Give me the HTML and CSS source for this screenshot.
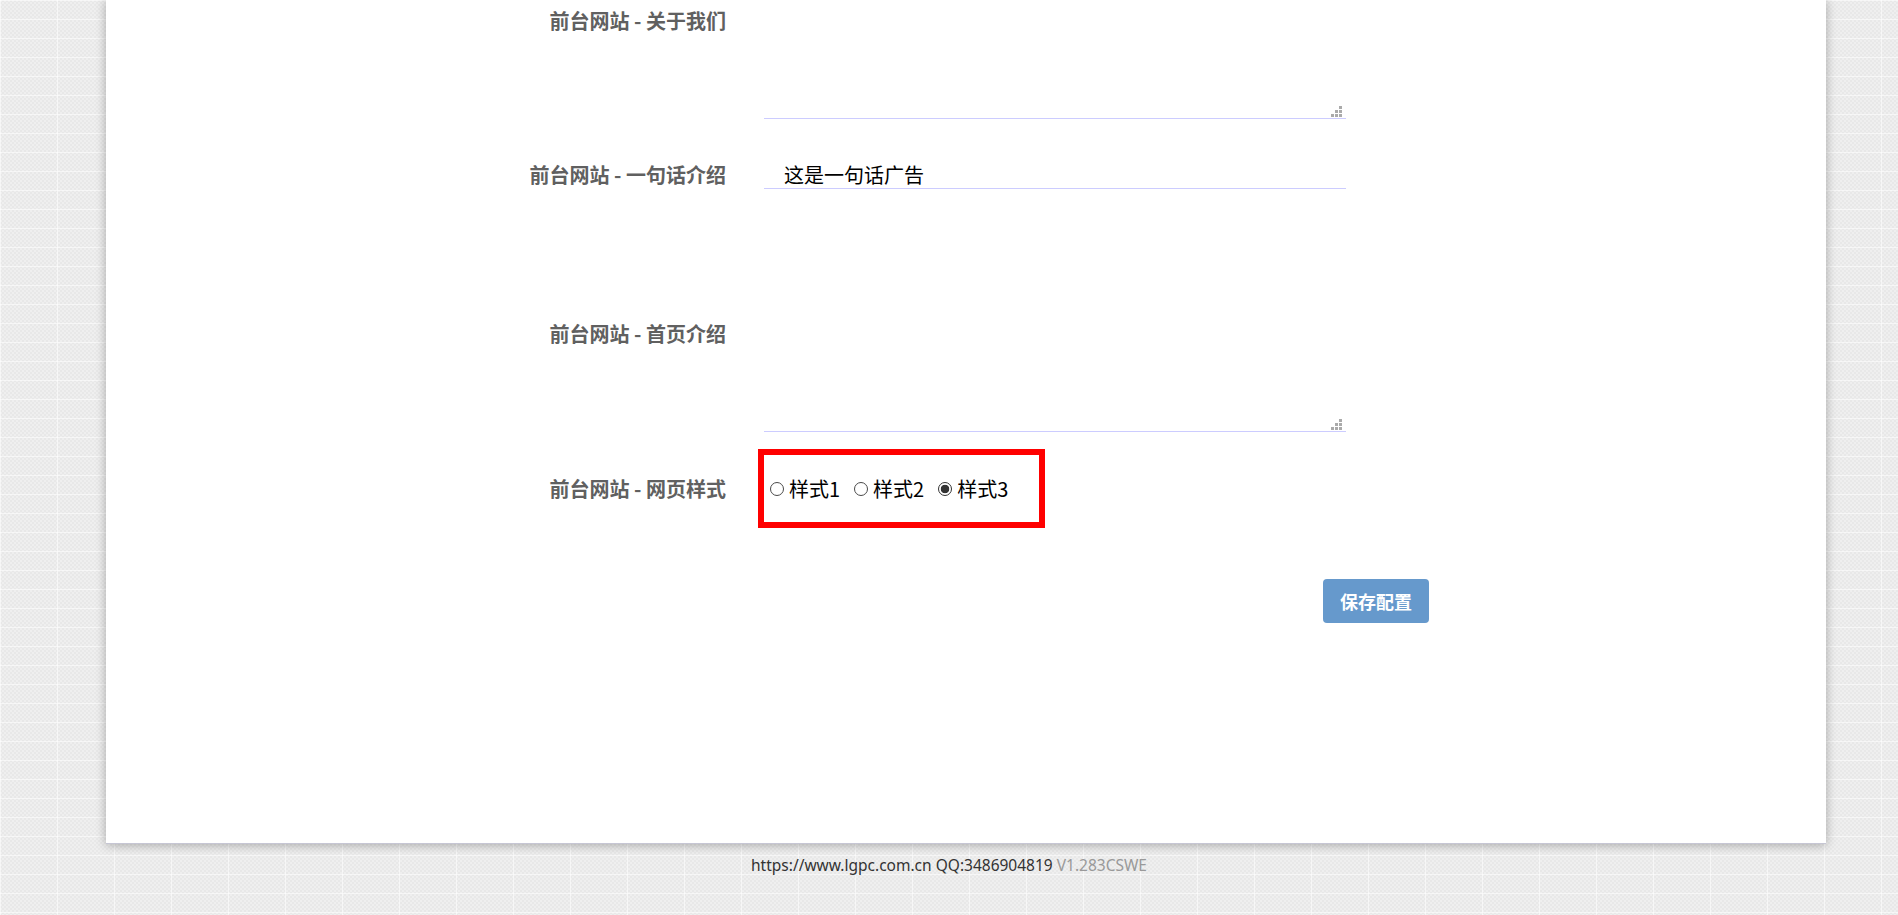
FILE: index.html
```html
<!DOCTYPE html>
<html lang="zh-CN">
<head>
    <meta charset="UTF-8">
    <meta name="viewport" content="width=device-width, initial-scale=1.0">
    <title>网站配置</title>
    <link rel="stylesheet" href="styles.css">
</head>
<body>

<div class="panel">
    <form class="config">
        <div class="row row-area">
            <label class="row-label">前台网站 - 关于我们</label>
            <div class="area-wrap">
                <textarea class="field area"></textarea>
                <svg class="grip" width="11" height="11" viewBox="0 0 11 11"><path d="M8 0h3v3H8zM4 4h3v3H4zM8 4h3v3H8zM0 8h3v3H0zM4 8h3v3H4zM8 8h3v3H8z" fill="#aaa"/></svg>
            </div>
        </div>
        <div class="row row-line">
            <label class="row-label">前台网站 - 一句话介绍</label>
            <input type="text" class="field line" value="这是一句话广告">
        </div>
        <div class="row row-area row-home">
            <label class="row-label">前台网站 - 首页介绍</label>
            <div class="area-wrap">
                <textarea class="field area"></textarea>
                <svg class="grip" width="11" height="11" viewBox="0 0 11 11"><path d="M8 0h3v3H8zM4 4h3v3H4zM8 4h3v3H8zM0 8h3v3H0zM4 8h3v3H4zM8 8h3v3H8z" fill="#aaa"/></svg>
            </div>
        </div>
        <div class="row row-style">
            <label class="row-label">前台网站 - 网页样式</label>
            <div class="styles">
                <label class="opt"><input type="radio" name="style" value="1">样式1</label>
                <label class="opt"><input type="radio" name="style" value="2">样式2</label>
                <label class="opt"><input type="radio" name="style" value="3" checked>样式3</label>
            </div>
        </div>
        <div class="actions">
            <button type="button">保存配置</button>
        </div>
    </form>
</div>

<div class="footer">
    https://www.lgpc.com.cn QQ:3486904819 <span class="ver">V1.283CSWE</span>
</div>

</body>
</html>
```

FILE: styles.css
```css
body {
    margin: 0;
    padding: 0;
    font-family: "Noto Sans", "Noto Sans CJK SC", sans-serif;
    background-color: #ebebeb;
    background-image:
        linear-gradient(rgba(255, 255, 255, 0.55) 1px, transparent 1px),
        linear-gradient(90deg, rgba(255, 255, 255, 0.55) 1px, transparent 1px),
        repeating-conic-gradient(#e8e8e8 0 25%, #efefef 0 50%);
    background-size: 57px 19px, 57px 19px, 4px 4px;
}
.panel {
    width: 1720px;
    margin-left: 106px;
    padding: 8px 0 220px;
    box-sizing: border-box;
    background-color: #ffffff;
    border-bottom: 1px solid #c6c6d4;
    box-shadow: 0 1px 10px rgba(0, 0, 0, 0.3);
}
.row {
    display: flex;
    align-items: flex-start;
}
.row-line {
    margin-top: 42px;
    align-items: center;
}
.row-home {
    margin-top: 132px;
}
.row-style {
    margin-top: 23px;
    align-items: center;
}
.row-label {
    width: 620px;
    margin-right: 38px;
    text-align: right;
    white-space: nowrap;
    font-family: "Noto Sans CJK SC", sans-serif;
    font-size: 20px;
    line-height: 26px;
    font-weight: bold;
    color: #606060;
}
.field {
    width: 582px;
    box-sizing: border-box;
    border: none;
    border-bottom: 1px solid #ccccff;
    outline: none;
    background: transparent;
    font-family: "Noto Sans CJK SC", sans-serif;
    font-size: 20px;
    color: #000;
}
.area-wrap {
    position: relative;
    display: flex;
}
.area {
    height: 111px;
    padding: 0 20px;
    resize: none;
}
.grip {
    position: absolute;
    right: 4px;
    bottom: 2px;
}
.line {
    height: 28px;
    padding: 0 20px;
    line-height: 26px;
}
.styles {
    display: flex;
    align-items: center;
    width: 275px;
    height: 67px;
    box-sizing: border-box;
    outline: 6px solid #ff0000;
}
.opt {
    display: inline-flex;
    align-items: center;
    margin-right: 8px;
    font-family: "Noto Sans CJK SC", sans-serif;
    font-size: 20px;
    color: #000;
}
.opt input {
    appearance: none;
    -webkit-appearance: none;
    flex-shrink: 0;
    width: 14px;
    height: 14px;
    margin: 0 5px 0 6px;
    box-sizing: border-box;
    border: 1px solid #4a4a4a;
    border-radius: 50%;
    background: #fff;
}
.opt input:checked {
    border-color: #333;
    background: radial-gradient(circle, #333 0 4px, #fff 4.6px);
}
.actions {
    margin-top: 57px;
    padding-left: 1217px;
}
.actions button {
    height: 44px;
    padding: 0 17px;
    border: none;
    border-radius: 4px;
    background-color: #6699cc;
    color: #ffffff;
    font-family: "Noto Sans CJK SC", sans-serif;
    font-size: 18px;
    font-weight: bold;
    cursor: pointer;
}
.footer {
    margin-top: 11px;
    text-align: center;
    font-size: 15.5px;
    line-height: 21px;
    color: #333;
}
.footer .ver {
    color: #999;
}
```
